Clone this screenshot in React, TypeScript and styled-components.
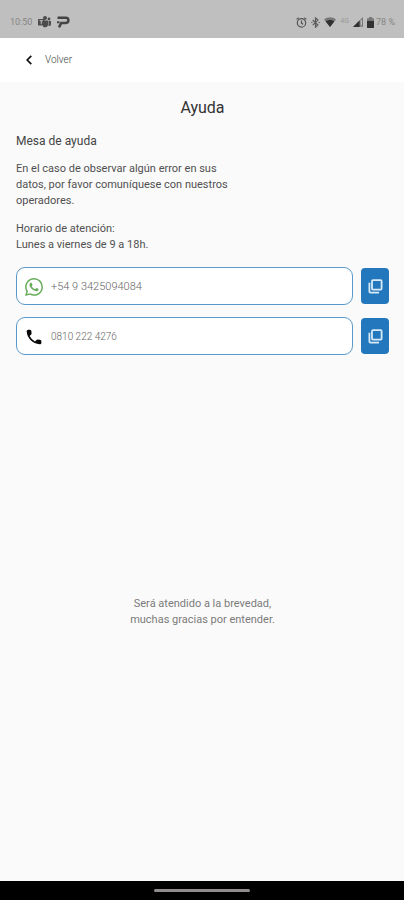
import React from "react";
import styled, { createGlobalStyle } from "styled-components";

const GlobalStyle = createGlobalStyle`
  *, *::before, *::after { box-sizing: border-box; }
  body { margin: 0; background: #fafafa; font-family: Roboto, "Liberation Sans", sans-serif; }
  h1, h2, p { margin: 0; font-weight: 400; }
`;

const Screen = styled.div`
  display: flex;
  flex-direction: column;
  min-height: 100vh;
  background: #fafafa;
  color: #505050;
`;

const StatusBar = styled.div`
  display: flex;
  align-items: center;
  justify-content: space-between;
  height: 38px;
  padding: 6px 9px 0 10px;
  background: #bfbfbf;
  color: #858585;
  font-size: 9px;
`;

const StatusGroup = styled.div<{ $gap: number }>`
  display: flex;
  align-items: center;
  gap: ${({ $gap }) => $gap}px;

  svg { display: block; flex: none; }
`;

const NetworkType = styled.span`
  font-size: 7px;
  line-height: 8px;
  align-self: flex-start;
  color: #989898;
`;

const Header = styled.header`
  display: flex;
  align-items: center;
  height: 44px;
  padding: 0 22px;
  background: #ffffff;
`;

const BackButton = styled.button`
  display: flex;
  align-items: center;
  gap: 9px;
  padding: 0;
  border: 0;
  background: none;
  color: #444444;
  font: 300 10px/16px Roboto, sans-serif;
  cursor: pointer;
`;

const Main = styled.main`
  display: flex;
  flex-direction: column;
  flex: 1;
  padding: 16px 15px 12px 16px;
`;

const Title = styled.h1`
  color: #333333;
  font-size: 16px;
  line-height: 20px;
  text-align: center;
`;

const Subtitle = styled.h2`
  margin-top: 15px;
  color: #444444;
  font-size: 12px;
  line-height: 16px;
`;

const Paragraph = styled.p`
  max-width: 220px;
  margin-top: 12px;
  font-size: 11px;
  line-height: 16px;
`;

const ContactList = styled.div`
  display: flex;
  flex-direction: column;
  gap: 12px;
  margin-top: 14px;
`;

const ContactRow = styled.div`
  display: flex;
  align-items: center;
  gap: 8px;
`;

const Field = styled.label`
  display: flex;
  align-items: center;
  flex: 1;
  gap: 8px;
  min-width: 0;
  height: 38px;
  padding: 1px 8px 0;
  border: 1px solid #5a9acb;
  border-radius: 9px;
  background: #ffffff;

  svg { display: block; flex: none; }
`;

const FieldInput = styled.input<{ $size: number }>`
  flex: 1;
  min-width: 0;
  padding: 0;
  border: 0;
  outline: 0;
  background: none;
  color: #666666;
  font: 300 ${({ $size }) => $size}px/16px Roboto, sans-serif;
`;

const CopyButton = styled.button`
  display: flex;
  align-items: center;
  justify-content: center;
  width: 28px;
  height: 36px;
  padding: 0;
  border: 0;
  border-radius: 4px;
  background: #2378bd;
  color: #d8eaf8;
  cursor: pointer;
`;

const Closing = styled.p`
  margin: auto 0;
  color: #7a7a7a;
  font-size: 11px;
  line-height: 16px;
  text-align: center;
`;

const NavigationBar = styled.div`
  display: flex;
  align-items: center;
  justify-content: center;
  height: 19px;
  background: #000000;
`;

const HomeIndicator = styled.div`
  width: 24%;
  height: 3px;
  border-radius: 2px;
  background: #8f8b8f;
`;

const TeamsIcon = () => (
  <svg width="13" height="12" viewBox="0 0 13 12" fill="#4c4c4c" aria-hidden="true">
    <circle cx="7" cy="2" r="2" />
    <circle cx="11" cy="3" r="1.4" />
    <path d="M5 4.5h5V9a3 3 0 0 1-5 1.5zM10.5 5H13v3a2 2 0 0 1-2.5 2z" />
    <rect y="3" width="6.5" height="6.5" rx=".7" />
    <path d="M1.6 4.7h3.3M3.25 4.7v3.5" stroke="#bfbfbf" strokeWidth="1" />
  </svg>
);

const ParkingIcon = () => (
  <svg width="13" height="12" viewBox="0 0 13 12" fill="none" stroke="#444" strokeWidth="2.5" aria-hidden="true">
    <path d="M.5 1.7h8.3a2.6 2.6 0 0 1 0 5.2H4.2L2 11.4M1.2 5.3v2" />
  </svg>
);

const AlarmIcon = () => (
  <svg width="11" height="11" viewBox="0 0 11 11" fill="none" stroke="#555" strokeWidth="1.2" aria-hidden="true">
    <circle cx="5.5" cy="5.9" r="4.2" />
    <path d="M5.5 3.5v2.8l1.7 1M.6 2.4 2.7.7M10.4 2.4 8.3.7" />
  </svg>
);

const BluetoothIcon = () => (
  <svg width="9" height="11" viewBox="0 0 9 11" fill="none" stroke="#5b5b5b" strokeWidth="1.2" aria-hidden="true">
    <path d="m1.7 3 5.2 5-2.4 2.2V.9l2.4 2.2-5.2 5M.2 5.5h1.3M7.5 5.5h1.3" />
  </svg>
);

const WifiIcon = () => (
  <svg width="12" height="10" viewBox="0 0 12 10" aria-hidden="true">
    <path d="M0 2.5C3.5-.6 8.5-.6 12 2.5L6 10z" fill="#777" />
    <path d="M1.8 4.5c2.5-2 5.9-2 8.4 0L6 10z" fill="#303030" />
  </svg>
);

const SignalIcon = () => (
  <svg width="10" height="10" viewBox="0 0 10 10" aria-hidden="true">
    <path d="M10 0v10H0z" fill="#777" />
    <path d="M6.5 3.5V10H0z" fill="#303030" />
    <path d="M8.2 3v4.8M8.2 8.6v1" stroke="#ddd" strokeWidth="1" />
  </svg>
);

const BatteryIcon = () => (
  <svg width="7" height="11" viewBox="0 0 7 11" aria-hidden="true">
    <path d="M2 0h3v1.2h1.2q.8 0 .8.8v8.2q0 .8-.8.8H.8Q0 11 0 10.2V2q0-.8.8-.8H2z" fill="#777" />
    <path d="M0 4h7v6.2q0 .8-.8.8H.8Q0 11 0 10.2z" fill="#333" />
  </svg>
);

const BackIcon = () => (
  <svg width="14" height="14" viewBox="0 0 14 14" fill="none" stroke="#111" strokeWidth="1.7" aria-hidden="true">
    <path d="M9.3 2.8 5.2 7l4.1 4.2" />
  </svg>
);

const WhatsAppIcon = () => (
  <svg width="18" height="18" viewBox="0 0 24 24" fill="#67ad5b" aria-hidden="true">
    <path d="M17.472 14.382c-.297-.149-1.758-.867-2.03-.967-.273-.099-.471-.148-.67.15-.197.297-.767.966-.94 1.164-.173.199-.347.223-.644.075-.297-.15-1.255-.463-2.39-1.475-.883-.788-1.48-1.761-1.653-2.059-.173-.297-.018-.458.13-.606.134-.133.298-.347.446-.52.149-.174.198-.298.298-.497.099-.198.05-.371-.025-.52-.075-.149-.669-1.612-.916-2.207-.242-.579-.487-.5-.669-.51-.173-.008-.371-.01-.57-.01-.198 0-.52.074-.792.372-.272.297-1.04 1.016-1.04 2.479 0 1.462 1.065 2.875 1.213 3.074.149.198 2.096 3.2 5.077 4.487.709.306 1.262.489 1.694.625.712.227 1.36.195 1.871.118.571-.085 1.758-.719 2.006-1.413.248-.694.248-1.289.173-1.413-.074-.124-.272-.198-.57-.347m-5.421 7.403h-.004a9.87 9.87 0 0 1-5.031-1.378l-.361-.214-3.741.982.998-3.648-.235-.374a9.86 9.86 0 0 1-1.51-5.26c.001-5.45 4.436-9.884 9.888-9.884 2.64 0 5.122 1.03 6.988 2.898a9.825 9.825 0 0 1 2.893 6.994c-.003 5.45-4.437 9.884-9.885 9.884m8.413-18.297A11.815 11.815 0 0 0 12.05 0C5.495 0 .16 5.335.157 11.892c0 2.096.547 4.142 1.588 5.945L.057 24l6.305-1.654a11.882 11.882 0 0 0 5.683 1.448h.005c6.554 0 11.89-5.335 11.893-11.893a11.821 11.821 0 0 0-3.48-8.413Z" />
  </svg>
);

const PhoneIcon = () => (
  <svg width="18" height="18" viewBox="1 1 22 22" fill="#080808" aria-hidden="true">
    <path d="m19.23 15.26-2.54-.29a1.99 1.99 0 0 0-1.64.57l-1.84 1.84a15.045 15.045 0 0 1-6.59-6.59l1.85-1.85c.43-.43.64-1.03.57-1.64l-.29-2.52a2.001 2.001 0 0 0-1.99-1.77H5.03c-1.13 0-2.07.94-2 2.07.53 8.54 7.36 15.36 15.89 15.89 1.13.07 2.07-.87 2.07-2v-1.73c.01-1.01-.75-1.86-1.76-1.98z" />
  </svg>
);

const CopyIcon = () => (
  <svg width="15" height="15" viewBox="0 0 15 15" fill="none" stroke="currentColor" aria-hidden="true">
    <rect x="4" y="1.2" width="9.6" height="9.4" rx="1" strokeWidth="1.8" />
    <path d="M1.4 3.8v8.8q0 1 1 1H11" strokeWidth="1.8" />
  </svg>
);

const contacts = [
  { name: "WhatsApp", number: "+54 9 3425094084", size: 11, Icon: WhatsAppIcon },
  { name: "Teléfono", number: "0810 222 4276", size: 10, Icon: PhoneIcon },
];

export default function App() {
  return (
    <>
      <GlobalStyle />
      <Screen>
        <StatusBar>
          <StatusGroup $gap={6}>
            <span>10:50</span>
            <TeamsIcon />
            <ParkingIcon />
          </StatusGroup>
          <StatusGroup $gap={4}>
            <AlarmIcon />
            <BluetoothIcon />
            <WifiIcon />
            <NetworkType>4G</NetworkType>
            <SignalIcon />
            <StatusGroup $gap={2}>
              <BatteryIcon />
              <span>78 %</span>
            </StatusGroup>
          </StatusGroup>
        </StatusBar>
        <Header>
          <BackButton type="button">
            <BackIcon />
            Volver
          </BackButton>
        </Header>
        <Main>
          <Title>Ayuda</Title>
          <Subtitle>Mesa de ayuda</Subtitle>
          <Paragraph>
            En el caso de observar algún error en sus datos, por favor comuníquese con nuestros operadores.
          </Paragraph>
          <Paragraph>
            Horario de atención:
            <br />
            Lunes a viernes de 9 a 18h.
          </Paragraph>
          <ContactList>
            {contacts.map(({ name, number, size, Icon }) => (
              <ContactRow key={name}>
                <Field>
                  <Icon />
                  <FieldInput $size={size} type="tel" aria-label={name} value={number} readOnly />
                </Field>
                <CopyButton
                  type="button"
                  aria-label={`Copiar ${name}`}
                  onClick={() => navigator.clipboard?.writeText(number)}
                >
                  <CopyIcon />
                </CopyButton>
              </ContactRow>
            ))}
          </ContactList>
          <Closing>
            Será atendido a la brevedad,
            <br />
            muchas gracias por entender.
          </Closing>
        </Main>
        <NavigationBar>
          <HomeIndicator />
        </NavigationBar>
      </Screen>
    </>
  );
}
